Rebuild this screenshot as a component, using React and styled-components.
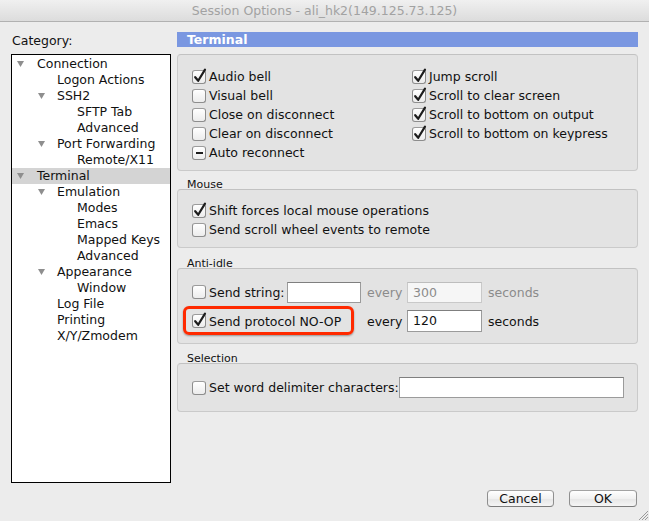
import React from "react";
import styled, { createGlobalStyle } from "styled-components";

const Global = createGlobalStyle`
  html, body { margin: 0; padding: 0; background: #ececec; }
  body { font-family: "DejaVu Sans", "Liberation Sans", sans-serif; font-size: 12.5px; color: #111; }
  * { box-sizing: border-box; }
`;

const Window = styled.div`
  position: relative;
  width: 649px;
  height: 521px;
  display: flex;
  flex-direction: column;
  background: #ececec;
  overflow: hidden;
`;

const TitleBar = styled.div`
  height: 22px;
  border-bottom: 1px solid #b1b1b1;
  background: linear-gradient(#f0f0f0, #dcdcdc);
  color: #a2a2a2;
  font-size: 12.5px;
  line-height: 21px;
  text-align: center;
`;

const Body = styled.div`
  flex: 1;
  display: flex;
  padding: 10px 0 0 11px;
`;

const Sidebar = styled.div`
  width: 160px;
  display: flex;
  flex-direction: column;
`;

const CategoryLabel = styled.div`
  height: 22px;
  line-height: 16px;
  padding: 1px 0 0 1px;
`;

const TreeBox = styled.div`
  height: 429px;
  border: 1.5px solid #000;
  background: #fff;
  padding-top: 1px;
`;

const TreeRow = styled.div`
  height: 16px;
  line-height: 16px;
  display: flex;
  align-items: center;
  padding-left: ${(p) => 5 + p.$level * 20}px;
  background: ${(p) => (p.$selected ? "#d4d4d4" : "transparent")};
  white-space: nowrap;
`;

const Toggle = styled.span`
  width: 20px;
  flex: none;
  display: flex;
  align-items: center;
  padding-left: ${(p) => (p.$level > 0 ? 1 : 0)}px;
`;

const Triangle = () => (
  <svg width="7" height="6" viewBox="0 0 7 6">
    <path d="M0 0 H7 L3.5 6 Z" fill="#8e8e8e" />
  </svg>
);

const Content = styled.div`
  margin-left: 6px;
  width: 461px;
  display: flex;
  flex-direction: column;
`;

const SectionHeader = styled.div`
  height: 15px;
  margin-bottom: 7px;
  background: #7a97e1;
  color: #fff;
  font-weight: bold;
  font-size: 12.5px;
  line-height: 15px;
  padding-left: 10px;
`;

const Panel = styled.div`
  height: ${(p) => p.$h}px;
  background: #e3e3e3;
  border: 1px solid #cacaca;
  border-top-color: #c2c2c2;
  border-radius: 4px;
  padding: ${(p) => p.$pt}px 0 0 14px;
`;

const GroupLabel = styled.div`
  height: ${(p) => p.$h}px;
  padding-top: ${(p) => p.$h - 11}px;
  font-size: 11px;
  line-height: 14px;
  padding-left: 10px;
`;

const TwoCols = styled.div`
  display: grid;
  grid-template-columns: 220px auto;
`;

const Col = styled.div`
  display: flex;
  flex-direction: column;
`;

const CheckRow = styled.label`
  position: relative;
  height: 19px;
  display: flex;
  align-items: center;
  gap: 3px;
  white-space: nowrap;
  color: #111;
`;

const Box = styled.span`
  position: relative;
  width: 14px;
  height: 14px;
  flex: none;
  border: 1px solid #8d8d8d;
  border-top-color: #9c9c9c;
  border-radius: 3px;
  background: linear-gradient(#ffffff, #ececec);
  box-shadow: inset 0 1px 0 #fff;
  svg {
    position: absolute;
    left: 0px;
    top: -3px;
    overflow: visible;
  }
`;

const Checkbox = ({ state = "off" }) => (
  <Box>
    {state === "on" && (
      <svg width="14" height="16" viewBox="0 0 14 16">
        <path
          d="M2.2 9.2 L5.2 12.8 L12 1.6"
          fill="none"
          stroke="#1d1d1d"
          strokeWidth="2.2"
          strokeLinecap="round"
          strokeLinejoin="round"
        />
      </svg>
    )}
    {state === "mixed" && (
      <svg width="14" height="16" viewBox="0 0 14 16">
        <path d="M3 9 H10" stroke="#1d1d1d" strokeWidth="2" />
      </svg>
    )}
  </Box>
);

const Check = ({ state, children, highlight }) => (
  <CheckRow>
    {highlight && <Highlight />}
    <Checkbox state={state} />
    <span>{children}</span>
  </CheckRow>
);

const Highlight = styled.span`
  position: absolute;
  left: -9px;
  top: -5.5px;
  width: 171px;
  height: 29px;
  border: 3.5px solid #ff2a00;
  border-radius: 6px;
  box-shadow: 0 1px 2px rgba(0, 0, 0, 0.35);
  pointer-events: none;
`;

const IdleGrid = styled.div`
  display: grid;
  grid-template-columns: 172px 43px 75px auto;
  grid-auto-rows: 26px;
  row-gap: 3px;
  align-items: center;
`;

const Cell = styled.div`
  display: flex;
  align-items: center;
  gap: 2px;
  white-space: nowrap;
  padding-left: ${(p) => p.$pl || 0}px;
  color: ${(p) => (p.$disabled ? "#8b8b8b" : "#111")};
`;

const TextField = styled.div`
  width: ${(p) => p.$w}px;
  height: ${(p) => p.$h || 21}px;
  border: 1px solid ${(p) => (p.$disabled ? "#c9c9c9" : "#9b9b9b")};
  border-top-color: ${(p) => (p.$disabled ? "#bdbdbd" : "#7f7f7f")};
  background: ${(p) => (p.$disabled ? "#f6f6f6" : "#fff")};
  color: ${(p) => (p.$disabled ? "#8b8b8b" : "#111")};
  padding-left: 5px;
  line-height: ${(p) => (p.$h || 21) - 2}px;
  flex: none;
`;

const SelRow = styled.div`
  height: 25px;
  display: flex;
  align-items: center;
  gap: 0px;
`;

const Footer = styled.div`
  display: flex;
  justify-content: flex-end;
  gap: 15px;
  padding: 0 12px 14px 0;
`;

const Button = styled.button`
  width: ${(p) => p.$w}px;
  height: 17px;
  border: 1px solid #8f8f8f;
  border-top-color: #a3a3a3;
  border-bottom-color: #7c7c7c;
  border-radius: 4px;
  background: linear-gradient(#ffffff, #f1f1f1 50%, #e6e6e6 51%, #f5f5f5);
  font-family: "DejaVu Sans", "Liberation Sans", sans-serif;
  font-size: 12.5px;
  color: #111;
  padding: 0;
  line-height: 15px;
`;

const Grip = styled.svg`
  position: absolute;
  right: 1px;
  bottom: 1px;
`;

const tree = [
  { t: "Connection", l: 0, open: true },
  { t: "Logon Actions", l: 1 },
  { t: "SSH2", l: 1, open: true },
  { t: "SFTP Tab", l: 2 },
  { t: "Advanced", l: 2 },
  { t: "Port Forwarding", l: 1, open: true },
  { t: "Remote/X11", l: 2 },
  { t: "Terminal", l: 0, open: true, sel: true },
  { t: "Emulation", l: 1, open: true },
  { t: "Modes", l: 2 },
  { t: "Emacs", l: 2 },
  { t: "Mapped Keys", l: 2 },
  { t: "Advanced", l: 2 },
  { t: "Appearance", l: 1, open: true },
  { t: "Window", l: 2 },
  { t: "Log File", l: 1 },
  { t: "Printing", l: 1 },
  { t: "X/Y/Zmodem", l: 1 },
];

export default function App() {
  return (
    <>
      <Global />
      <Window>
        <TitleBar>Session Options - ali_hk2(149.125.73.125)</TitleBar>
        <Body>
          <Sidebar>
            <CategoryLabel>Category:</CategoryLabel>
            <TreeBox>
              {tree.map((n, i) => (
                <TreeRow key={i} $level={n.l} $selected={n.sel}>
                  <Toggle $level={n.l}>{n.open && <Triangle />}</Toggle>
                  {n.t}
                </TreeRow>
              ))}
            </TreeBox>
          </Sidebar>
          <Content>
            <SectionHeader>Terminal</SectionHeader>
            <Panel $h={117} $pt={12}>
              <TwoCols>
                <Col>
                  <Check state="on">Audio bell</Check>
                  <Check>Visual bell</Check>
                  <Check>Close on disconnect</Check>
                  <Check>Clear on disconnect</Check>
                  <Check state="mixed">Auto reconnect</Check>
                </Col>
                <Col>
                  <Check state="on">Jump scroll</Check>
                  <Check state="on">Scroll to clear screen</Check>
                  <Check state="on">Scroll to bottom on output</Check>
                  <Check state="on">Scroll to bottom on keypress</Check>
                </Col>
              </TwoCols>
            </Panel>
            <GroupLabel $h={18}>Mouse</GroupLabel>
            <Panel $h={59} $pt={11}>
              <Check state="on">Shift forces local mouse operations</Check>
              <Check>Send scroll wheel events to remote</Check>
            </Panel>
            <GroupLabel $h={20}>Anti-idle</GroupLabel>
            <Panel $h={76} $pt={10}>
              <IdleGrid>
                <Cell>
                  <Check>Send string:</Check>
                  <TextField $w={74} />
                </Cell>
                <Cell $pl={3} $disabled>every</Cell>
                <TextField $w={75} $disabled>300</TextField>
                <Cell $pl={6} $disabled>seconds</Cell>
                <Cell>
                  <Check state="on" highlight>
                    Send protocol NO-OP
                  </Check>
                </Cell>
                <Cell $pl={3}>every</Cell>
                <TextField $w={75} $h={22}>120</TextField>
                <Cell $pl={6}>seconds</Cell>
              </IdleGrid>
            </Panel>
            <GroupLabel $h={19}>Selection</GroupLabel>
            <Panel $h={49} $pt={11}>
              <SelRow>
                <Check>Set word delimiter characters:</Check>
                <TextField $w={225} />
              </SelRow>
            </Panel>
          </Content>
        </Body>
        <Footer>
          <Button $w={67}>Cancel</Button>
          <Button $w={68}>OK</Button>
        </Footer>
        <Grip width="10" height="10" viewBox="0 0 10 10">
          <path d="M1 10 L10 1 M4 10 L10 4 M7 10 L10 7" stroke="#9a9a9a" strokeWidth="1" />
        </Grip>
      </Window>
    </>
  );
}
